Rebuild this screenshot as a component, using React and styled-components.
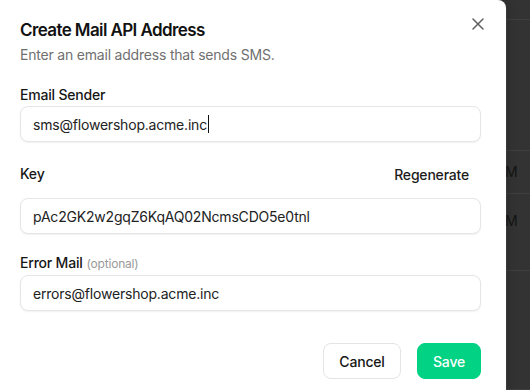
import React from "react";
import styled, { createGlobalStyle } from "styled-components";

const Global = createGlobalStyle`
  html, body { margin: 0; padding: 0; }
  body {
    background: #333333;
    font-family: Inter, "Noto Sans", sans-serif;
    -webkit-font-smoothing: antialiased;
  }
  * { box-sizing: border-box; }
`;

const Page = styled.div`
  position: relative;
  width: 530px;
  height: 390px;
  overflow: hidden;
  background: #333333;
`;

const Table = styled.div`
  display: flex;
  flex-direction: column;
`;

const Row = styled.div`
  display: grid;
  grid-template-columns: 505px 1fr;
  align-items: ${(p) => p.$align || "center"};
  height: ${(p) => p.$h}px;
  border-bottom: 1px solid #3f3f3f;
  padding-top: ${(p) => p.$pt || 0}px;
`;

const Cell = styled.span`
  font-size: 14px;
  line-height: 20px;
  color: #141414;
  white-space: nowrap;
`;

const Modal = styled.div`
  position: absolute;
  top: 0;
  left: 0;
  width: 506px;
  height: 390px;
  background: #ffffff;
  border-top-right-radius: 8px;
  box-shadow: 1px 0 0 rgba(255, 255, 255, 0.06), 0 0 12px rgba(0, 0, 0, 0.25);
  padding: 16px 25px 0 20px;
  display: flex;
  flex-direction: column;
  letter-spacing: -0.2px;
`;

const CloseButton = styled.button`
  position: absolute;
  top: 12px;
  right: 16px;
  width: 24px;
  height: 24px;
  border: none;
  background: transparent;
  padding: 0;
  display: flex;
  align-items: center;
  justify-content: center;
  cursor: pointer;
`;

const Title = styled.h2`
  margin: 0;
  font-size: 17px;
  line-height: 28px;
  font-weight: 600;
  color: #111111;
  letter-spacing: -0.6px;
`;

const Subtitle = styled.p`
  margin: 1px 0 0;
  font-size: 14px;
  line-height: 20px;
  color: #707070;
`;

const Field = styled.div`
  display: flex;
  flex-direction: column;
  margin-top: ${(p) => p.$mt}px;
`;

const LabelRow = styled.div`
  display: flex;
  align-items: center;
  justify-content: space-between;
  height: ${(p) => (p.$h ? p.$h + "px" : "auto")};
  margin-bottom: ${(p) => p.$mb}px;
`;

const Label = styled.label`
  font-size: 14px;
  line-height: 20px;
  font-weight: 500;
  color: #161616;
`;

const Optional = styled.span`
  font-size: 12px;
  font-weight: 400;
  color: #9a9a9a;
  margin-left: 4px;
`;

const GhostButton = styled.button`
  height: 32px;
  padding: 0 12px;
  border: none;
  background: transparent;
  font-family: inherit;
  font-size: 14px;
  font-weight: 500;
  letter-spacing: -0.2px;
  color: #1c1c1c;
  cursor: pointer;
`;

const InputBox = styled.div`
  height: 36px;
  border: 1px solid #e6e6e6;
  border-radius: 8px;
  box-shadow: 0 1px 2px rgba(0, 0, 0, 0.06);
  padding: 0 12px;
  display: flex;
  align-items: center;
  font-size: 14px;
  color: #222222;
  background: #fff;
`;

const Caret = styled.span`
  display: inline-block;
  width: 1px;
  height: 18px;
  background: #111;
  margin-left: 1px;
`;

const Footer = styled.div`
  display: flex;
  justify-content: flex-end;
  gap: 16px;
  margin-top: 32px;
`;

const Button = styled.button`
  height: 36px;
  width: ${(p) => (p.$primary ? 64 : 78)}px;
  padding: 0;
  border-radius: 8px;
  border: 1px solid ${(p) => (p.$primary ? "#02d283" : "#e4e4e4")};
  background: ${(p) => (p.$primary ? "#02d283" : "#ffffff")};
  color: ${(p) => (p.$primary ? "#ffffff" : "#161616")};
  font-family: inherit;
  font-size: 14px;
  font-weight: 500;
  letter-spacing: -0.2px;
  cursor: pointer;
`;

function XIcon() {
  return (
    <svg width="12" height="12" viewBox="0 0 12 12" fill="none">
      <path d="M1 1L11 11M11 1L1 11" stroke="#5f5f5f" strokeWidth="1.5" strokeLinecap="round" />
    </svg>
  );
}

export default function App() {
  return (
    <>
      <Global />
      <Page>
        <Table>
          <Row $h={20} />
          <Row $h={131} />
          <Row $h={43}>
            <span />
            <Cell>M</Cell>
          </Row>
          <Row $h={77} $align="start" $pt={17}>
            <span />
            <Cell>M</Cell>
          </Row>
          <Row $h={119} />
        </Table>
        <Modal>
          <CloseButton aria-label="Close">
            <XIcon />
          </CloseButton>
          <Title>Create Mail API Address</Title>
          <Subtitle>Enter an email address that sends SMS.</Subtitle>

          <Field $mt={20}>
            <LabelRow $mb={1}>
              <Label>Email Sender</Label>
            </LabelRow>
            <InputBox>
              sms@flowershop.acme.inc
              <Caret />
            </InputBox>
          </Field>

          <Field $mt={16}>
            <LabelRow $h={32} $mb={8}>
              <Label>Key</Label>
              <GhostButton>Regenerate</GhostButton>
            </LabelRow>
            <InputBox>pAc2GK2w2gqZ6KqAQ02NcmsCDO5e0tnl</InputBox>
          </Field>

          <Field $mt={19}>
            <LabelRow $mb={1}>
              <Label>
                Error Mail<Optional>(optional)</Optional>
              </Label>
            </LabelRow>
            <InputBox>errors@flowershop.acme.inc</InputBox>
          </Field>

          <Footer>
            <Button>Cancel</Button>
            <Button $primary>Save</Button>
          </Footer>
        </Modal>
      </Page>
    </>
  );
}
